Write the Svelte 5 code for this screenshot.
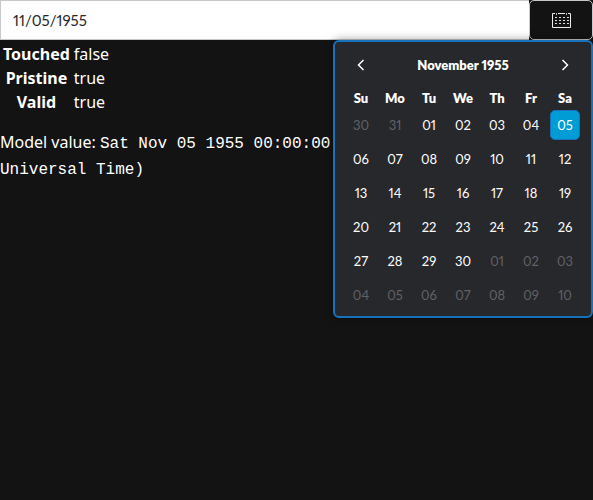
<script>
  const weekdays = ['Su', 'Mo', 'Tu', 'We', 'Th', 'Fr', 'Sa'];
  const start = new Date(1955, 9, 30);
  const weeks = Array.from({ length: 6 }, (_, w) =>
    Array.from({ length: 7 }, (_, d) => {
      const date = new Date(start.getFullYear(), start.getMonth(), start.getDate() + w * 7 + d);
      const current = date.getMonth() === 10;
      return {
        label: String(date.getDate()).padStart(2, '0'),
        outside: !current,
        selected: current && date.getDate() === 5
      };
    })
  );
  const states = [
    ['Touched', 'false'],
    ['Pristine', 'true'],
    ['Valid', 'true']
  ];
  const dots = [0, 1, 2].flatMap((r) => [0, 1, 2, 3].map((c) => [3 + c * 4, 5 + r * 3]));
</script>

<main>
  <div class="field">
    <input type="text" aria-label="Date" value="11/05/1955" />
    <button class="toggle" type="button" aria-label="Open calendar">
      <svg width="19" height="16" viewBox="0 0 19 16" aria-hidden="true">
        <path d="M3 1.5H.5v14h18v-14H16M6 1.5h7" fill="none" stroke="#eee" />
        <path d="M4.5 1v2M14.5 1v2" fill="none" stroke="#bbb" />
        {#each dots as [x, y]}
          <rect {x} {y} width="2" height="1" fill="#ddd" />
        {/each}
      </svg>
    </button>

    <section class="calendar" aria-label="Calendar">
      <header>
        <button class="nav" type="button" aria-label="Previous month">
          <svg width="8" height="12" viewBox="0 0 8 12" aria-hidden="true"><path d="M6.5 1L1.5 6l5 5" /></svg>
        </button>
        <strong>November 1955</strong>
        <button class="nav" type="button" aria-label="Next month">
          <svg width="8" height="12" viewBox="0 0 8 12" aria-hidden="true"><path d="M1.5 1l5 5-5 5" /></svg>
        </button>
      </header>
      <table class="month">
        <thead>
          <tr>
            {#each weekdays as day}<th scope="col">{day}</th>{/each}
          </tr>
        </thead>
        <tbody>
          {#each weeks as week}
            <tr>
              {#each week as day}
                <td>
                  <button type="button" class:outside={day.outside} class:selected={day.selected}>{day.label}</button>
                </td>
              {/each}
            </tr>
          {/each}
        </tbody>
      </table>
    </section>
  </div>

  <table class="states">
    <tbody>
      {#each states as [name, value]}
        <tr><th scope="row">{name}</th><td>{value}</td></tr>
      {/each}
    </tbody>
  </table>

  <p>Model value: <code>Sat Nov 05 1955 00:00:00 GMT+0000 (Coordinated Universal Time)</code></p>
</main>

<style>
  :global(body) {
    margin: 0;
    background: #131313;
  }
  main {
    display: flow-root;
    min-height: 100vh;
    background: #131313;
    color: #fff;
    font: 16px/24px 'Noto Sans', sans-serif;
  }
  button,
  input {
    box-sizing: border-box;
    margin: 0;
    font: inherit;
  }
  button {
    display: flex;
    align-items: center;
    justify-content: center;
    padding: 0;
    border: 0;
    background: none;
    color: inherit;
    cursor: pointer;
  }
  .field {
    position: relative;
    display: flex;
    height: 40px;
    font-family: Lato, 'Noto Sans', sans-serif;
    font-variant-numeric: proportional-nums;
  }
  input {
    flex: 1;
    min-width: 0;
    padding: 0 12px;
    border: 1px solid #c8c7cc;
    border-right: 0;
    border-radius: 0;
    background: #fff;
    color: #27282b;
    font-size: 15px;
    font-variant-numeric: inherit;
  }
  .toggle {
    width: 64px;
    border: 1px solid #c8c7cc;
    border-radius: 5px;
    background: #131313;
  }
  .calendar {
    position: absolute;
    top: 40px;
    right: 0;
    box-sizing: border-box;
    width: 260px;
    padding: 8px 9px 6px;
    border: 2px solid #1871bb;
    border-radius: 6px;
    background: #27282c;
    box-shadow: 0 0 10px rgba(0, 0, 0, 0.4);
    font-size: 13px;
    line-height: 20px;
  }
  header {
    display: flex;
    align-items: center;
    justify-content: space-between;
    height: 30px;
  }
  strong,
  .month th {
    font-weight: 800;
  }
  .nav {
    width: 34px;
    height: 30px;
  }
  .nav path {
    fill: none;
    stroke: #fff;
    stroke-width: 1.5;
  }
  .month {
    width: 100%;
    border-collapse: collapse;
    table-layout: fixed;
  }
  .month th {
    padding: 8px 0 2px;
  }
  .month td {
    padding: 0 0 4px;
  }
  .month tr:last-child td {
    padding-bottom: 0;
  }
  .month td button {
    width: 30px;
    height: 30px;
    margin: 0 auto;
    border-radius: 5px;
    font-variant-numeric: inherit;
  }
  .month .outside {
    color: #606266;
  }
  .month .selected {
    border: 1px solid #1871bb;
    background: #009cd6;
  }
  .states {
    margin-top: 2px;
    border-spacing: 2px 0;
  }
  .states th,
  .states td {
    padding: 0 1px;
  }
  p {
    margin: 15px 0;
    line-height: 26px;
  }
  code {
    font-family: 'Liberation Mono', monospace;
    line-height: 16px;
  }
</style>
